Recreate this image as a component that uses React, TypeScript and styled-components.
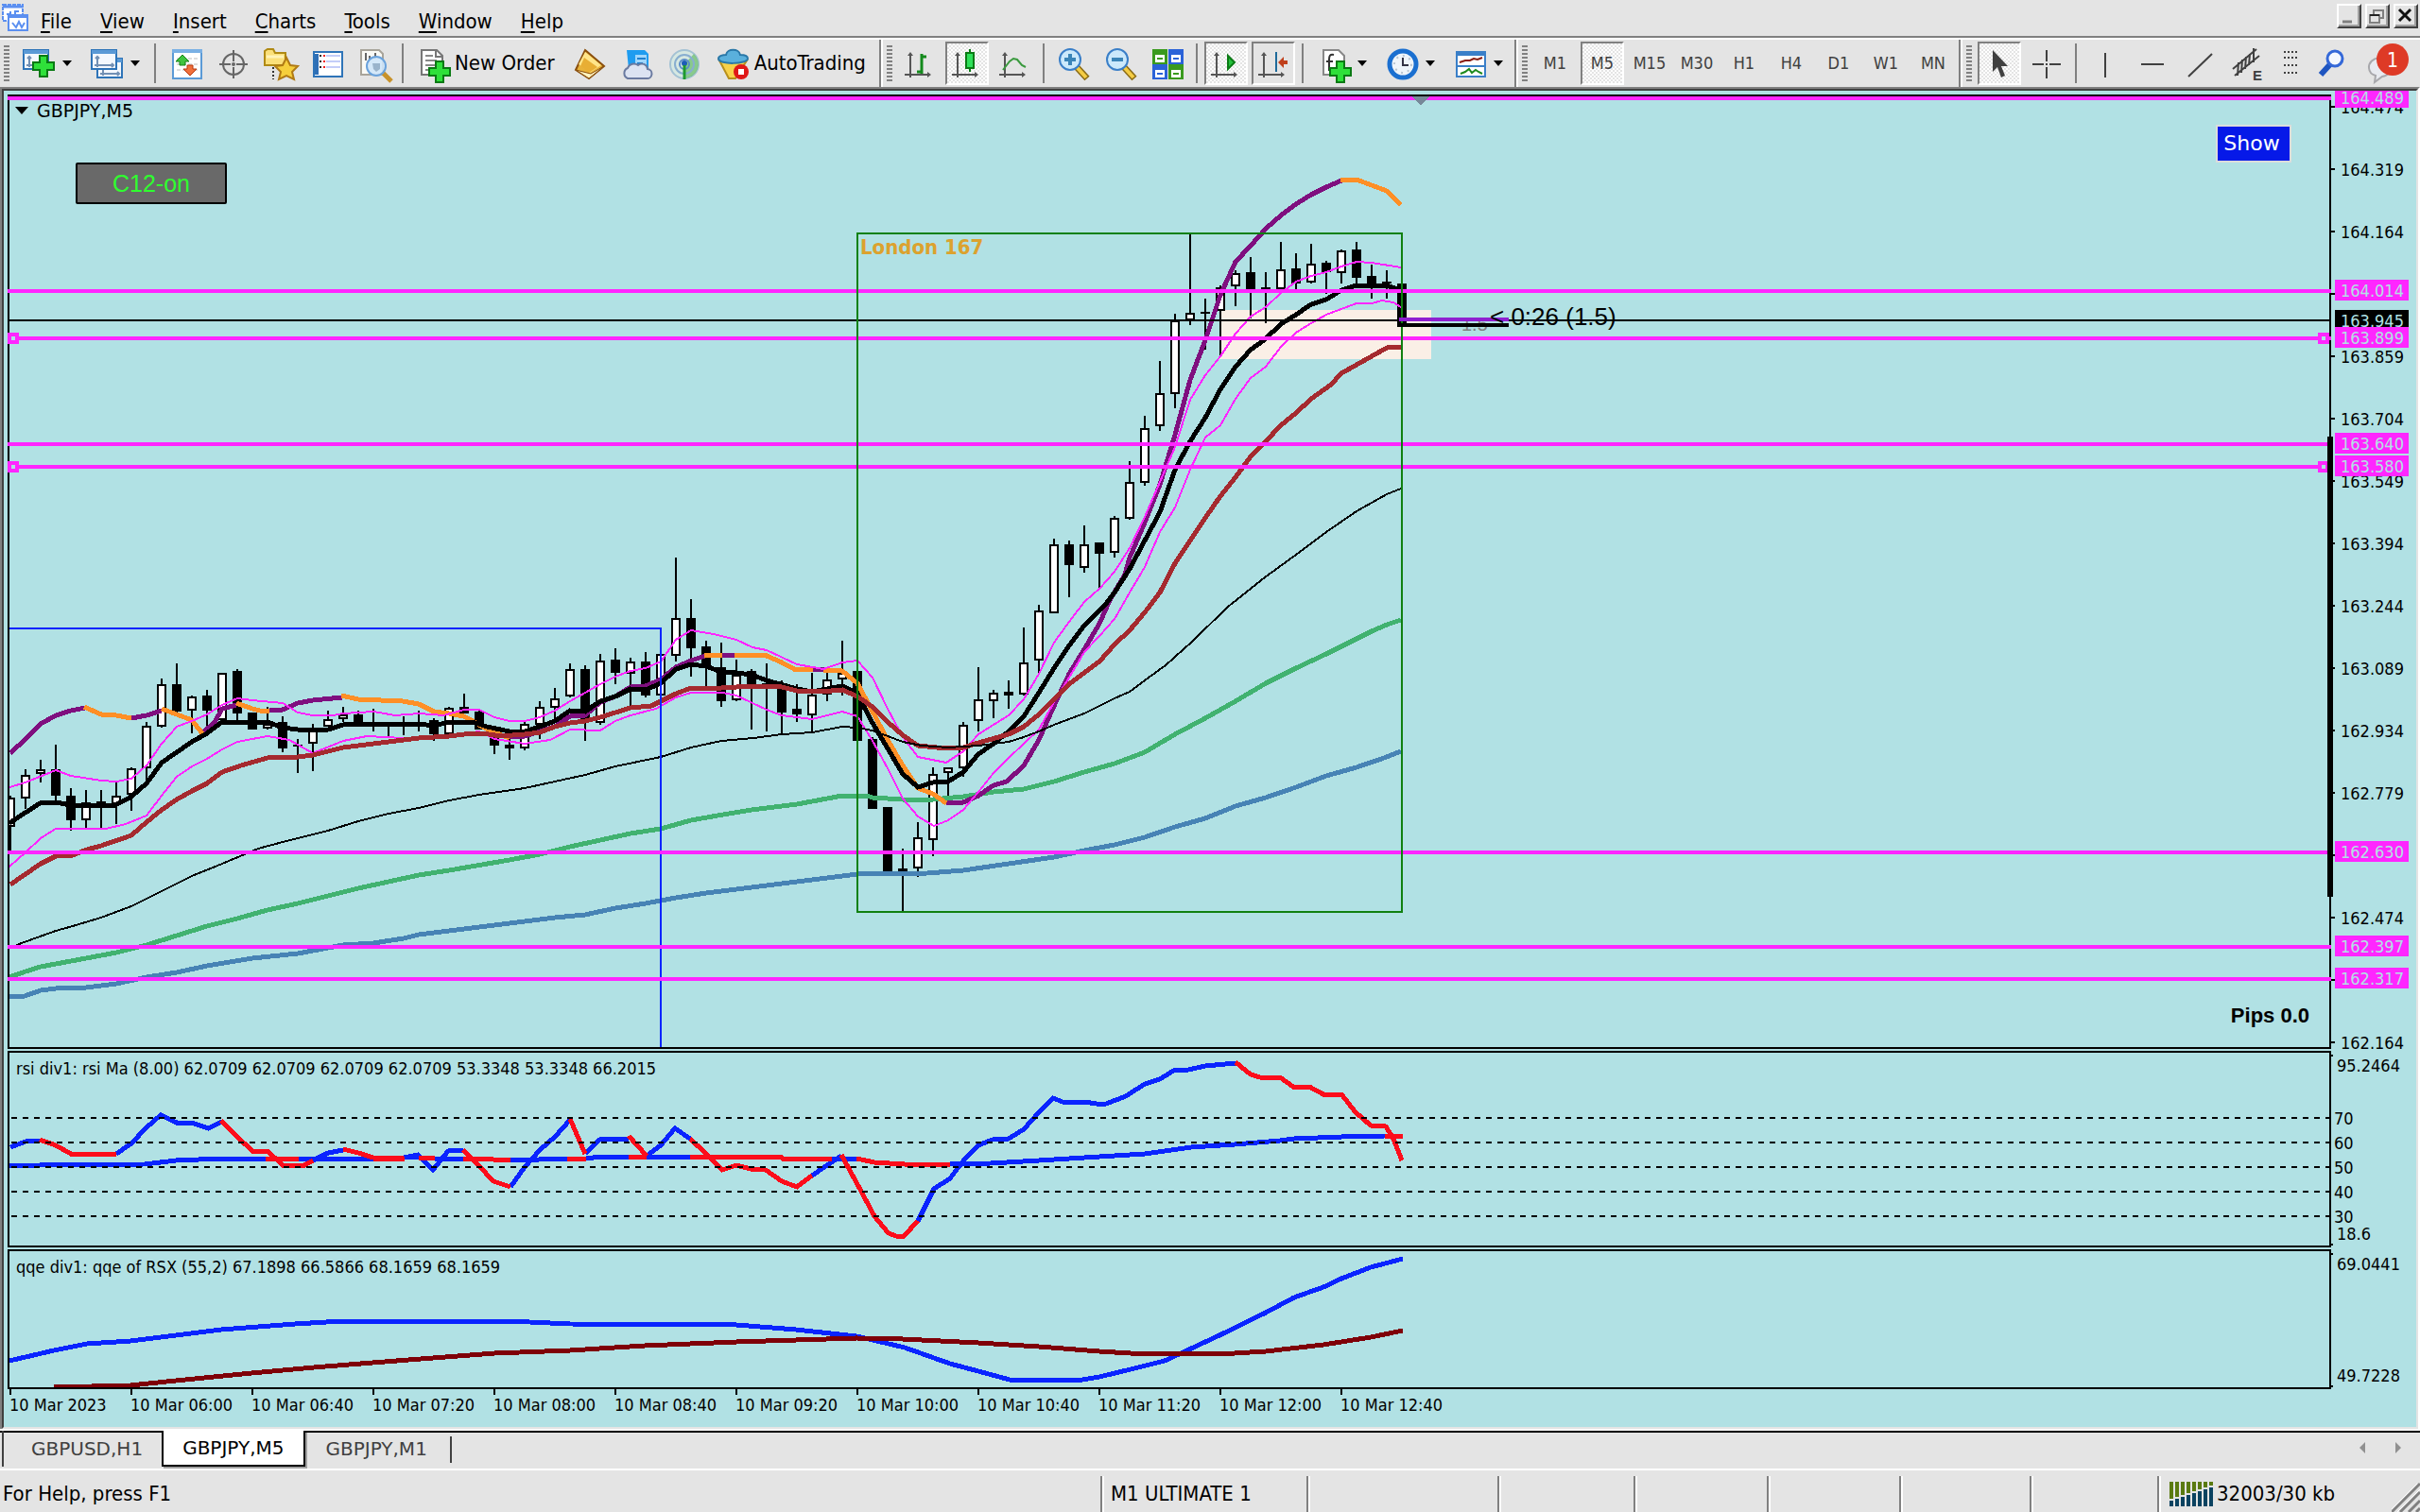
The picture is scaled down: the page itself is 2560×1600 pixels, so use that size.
import React from "react";
import styled, { createGlobalStyle, css } from "styled-components";

/* ---------- theme ---------- */
const C = {
  face: "#e4e4e4",
  gray: "#808080",
  dark: "#404040",
  chart: "#b1e1e4",
  magenta: "#ff26ff",
  blue: "#0a24ff",
  red: "#fc0d1b",
  purple: "#7f0f7f",
  orange: "#ff8f26",
  brown: "#a52a2f",
  green: "#41b270",
  steel: "#4783b5",
  maroon: "#7f0008",
  session: "#108010",
};
const UI_FONT = '"DejaVu Sans Condensed", "Noto Sans", sans-serif';
const WIDE_FONT = '"DejaVu Sans", "Noto Sans", sans-serif';
const ARIAL = '"Liberation Sans", Arial, sans-serif';

const GlobalStyle = createGlobalStyle`
  *, *::before, *::after { box-sizing: border-box; }
  body { margin: 0; background: ${C.face}; color: #000; font: 22px/26px ${UI_FONT}; }
  button { font: inherit; color: inherit; }
`;

/* ---------- shell ---------- */
const Page = styled.div`
  display: flex;
  flex-direction: column;
  min-height: 100vh;
  background: ${C.face};
`;

const MenuBar = styled.header`
  display: flex;
  align-items: center;
  height: 40px;
  border-bottom: 2px solid ${C.gray};
  padding: 0 2px;
`;
const MenuNav = styled.nav`
  display: flex;
  flex: 1;
`;
const MenuItem = styled.button`
  border: 0;
  background: none;
  padding: 7px 15px 0 15px;
  line-height: 26px;
  &::first-letter {
    text-decoration: underline;
    text-decoration-thickness: 2px;
    text-underline-offset: 3px;
  }
`;
const MenuLogo = styled.svg`
  width: 28px;
  height: 30px;
  flex: none;
  margin-right: -2px;
`;
const WindowButtons = styled.div`
  display: flex;
  gap: 4px;
  align-self: flex-start;
  padding-top: 4px;
`;
const WindowButton = styled.button`
  width: 26px;
  height: 26px;
  padding: 0;
  background: ${C.face};
  border: 2px solid;
  border-color: #fff ${C.dark} ${C.dark} #fff;
  box-shadow: inset -2px -2px 0 #a0a0a0;
  svg {
    display: block;
    width: 22px;
    height: 22px;
  }
`;

/* ---------- toolbar ---------- */
const ToolBar = styled.div`
  display: flex;
  height: 52px;
  border-top: 2px solid #fff;
`;
const ToolGroup = styled.div<{ $grow?: boolean }>`
  display: flex;
  align-items: center;
  gap: 4px;
  padding: 0 4px;
  ${(p) =>
    p.$grow
      ? css`
          flex: 1;
          min-width: 0;
          padding-right: 0;
        `
      : css`
          border-right: 2px solid ${C.gray};
          box-shadow: 2px 0 0 #fff;
          margin-right: 2px;
        `}
`;
const Grip = styled.i`
  width: 6px;
  height: 38px;
  margin-right: 2px;
  background: repeating-linear-gradient(${C.gray} 0 2px, transparent 2px 4px);
`;
const Separator = styled.i`
  width: 2px;
  height: 42px;
  margin: 0 3px;
  background: ${C.gray};
`;
const Tool = styled.button<{ $pressed?: boolean; $plain?: boolean; $width?: number }>`
  display: flex;
  align-items: center;
  justify-content: center;
  flex: none;
  width: ${(p) => p.$width ?? 46}px;
  height: 46px;
  padding: 0;
  border: 2px solid transparent;
  background: none;
  color: ${C.dark};
  font-size: 18px;
  ${(p) =>
    p.$pressed &&
    css`
      border-color: ${C.gray} #fff #fff ${C.gray};
      background: ${p.$plain ? C.face : "repeating-conic-gradient(#fff 0 25%, #e4e4e4 0 50%) 0 0 / 4px 4px"};
    `}
`;
const TextTool = styled.button`
  display: flex;
  align-items: center;
  flex: none;
  gap: 4px;
  height: 46px;
  padding: 0 10px 0 7px;
  border: 0;
  background: none;
`;
const Caret = styled.i`
  margin-left: 6px;
  border: 5px solid transparent;
  border-top: 6px solid #000;
  border-bottom: 0;
`;
const IconSvg = styled.svg`
  width: 36px;
  height: 36px;
  flex: none;
  overflow: visible;
`;

/* ---------- chart window ---------- */
const Workspace = styled.main`
  display: flex;
  flex: 1;
  border-top: 2px solid ${C.gray};
  border-left: 2px solid ${C.gray};
  border-right: 2px solid #fff;
`;
const ChartWindow = styled.section`
  position: relative;
  display: flex;
  flex-direction: column;
  flex: 1;
  min-width: 0;
  gap: 2px;
  padding: 4px 0 0 4px;
  border-top: 2px solid ${C.dark};
  border-left: 2px solid ${C.dark};
  border-right: 2px solid ${C.face};
  border-bottom: 2px solid ${C.face};
  background: ${C.chart};
  overflow: hidden;
`;
const PanelRow = styled.div<{ $height?: number }>`
  position: relative;
  display: flex;
  ${(p) =>
    p.$height
      ? css`
          height: ${p.$height}px;
        `
      : css`
          flex: 1;
          min-height: 1010px;
        `}
`;
const Plot = styled.svg`
  flex: 1;
  min-width: 0;
  height: 100%;
  shape-rendering: crispEdges;
  font: 18px ${UI_FONT};
`;
const Axis = styled.svg`
  flex: none;
  width: 90px;
  height: 100%;
  overflow: visible;
  shape-rendering: crispEdges;
  font: 18px ${UI_FONT};
`;
const PanelTitle = styled.h2<{ $symbol?: boolean }>`
  position: absolute;
  left: 9px;
  top: 8px;
  margin: 0;
  display: flex;
  align-items: center;
  gap: 9px;
  font: 18px/22px ${UI_FONT};
  ${(p) =>
    p.$symbol &&
    css`
      left: 8px;
      top: 6px;
      font: 19px/22px ${WIDE_FONT};
    `}
`;
const TitleArrow = styled.i`
  border: 7px solid transparent;
  border-top: 8px solid #000;
  border-bottom: 0;
`;
const TimeAxis = styled.ol`
  display: flex;
  height: 40px;
  margin: -2px 0 0 2px;
  padding: 0;
  list-style: none;
  font: 18px/22px ${UI_FONT};
`;
const TimeTick = styled.li`
  flex: none;
  width: 128px;
  padding-top: 6px;
  text-indent: -2px;
  white-space: nowrap;
  &::before {
    content: "";
    display: block;
    width: 2px;
    height: 6px;
    margin-top: -6px;
    background: #000;
  }
`;
const SwitchButton = styled.button`
  position: absolute;
  left: 72px;
  top: 72px;
  width: 160px;
  height: 44px;
  padding: 0;
  border: 2px solid #000;
  border-radius: 2px;
  background: #696969;
  color: #2fff2f;
  font: 25px/38px ${ARIAL};
`;
const ShowButton = styled.button`
  position: absolute;
  right: 132px;
  top: 32px;
  width: 80px;
  height: 40px;
  padding: 0 4px 0 0;
  border: 2px solid #dcdcdc;
  background: #0619e8;
  color: #fff;
  font: 22px/34px ${WIDE_FONT};
`;

/* ---------- bottom bars ---------- */
const TabBar = styled.div`
  display: flex;
  align-items: flex-start;
  height: 44px;
  border-top: 2px solid #fff;
  border-bottom: 2px solid #fff;
  box-shadow: inset 0 2px 0 #000;
  padding-left: 2px;
`;
const Tabs = styled.div`
  display: flex;
  flex: 1;
  height: 38px;
  padding-top: 2px;
  border-left: 2px solid ${C.dark};
`;
const Tab = styled.button<{ $active?: boolean }>`
  height: 36px;
  border: 0;
  background: none;
  padding: 0 24px 2px 22px;
  color: ${C.dark};
  font: 20px/26px ${WIDE_FONT};
  ${(p) =>
    p.$active &&
    css`
      padding: 0 20px;
      color: #000;
      background: #fff;
      border: 2px solid #000;
      border-top: 0;
      margin-top: -2px;
      height: 38px;
      box-shadow: 2px 2px 0 #a0a0a0;
    `}
  &:first-child {
    padding-left: 29px;
    padding-right: 20px;
  }
`;
const TabEnd = styled.i`
  width: 2px;
  height: 28px;
  margin-top: 4px;
  background: ${C.dark};
`;
const TabScroll = styled.div`
  display: flex;
  gap: 16px;
  padding: 9px 12px 0 0;
`;
const ScrollButton = styled.button`
  width: 22px;
  height: 18px;
  padding: 0;
  border: 0;
  background: none;
  svg {
    display: block;
    margin: 3px auto;
  }
`;
const StatusBar = styled.footer`
  display: flex;
  height: 44px;
  padding-top: 6px;
`;
const StatusCell = styled.div<{ $width?: number }>`
  display: flex;
  align-items: center;
  gap: 4px;
  height: 38px;
  padding: 0 0 0 9px;
  ${(p) =>
    p.$width
      ? css`
          flex: none;
          width: ${p.$width}px;
          border-left: 2px solid ${C.gray};
          box-shadow: inset 2px 0 0 #fff;
        `
      : css`
          flex: 1;
          padding-left: 3px;
        `}
`;
const SizeGrip = styled.svg`
  width: 30px;
  height: 32px;
  margin: 6px 0 0 auto;
`;

/* ---------- icons ---------- */
const Plus = ({ x, y }: { x: number; y: number }) => (
  <path
    transform={`translate(${x} ${y})`}
    d="M8 1h8v7h7v8h-7v7H8v-7H1V8h7z"
    fill="#2fe03a"
    stroke="#0a7a14"
    strokeWidth="2"
  />
);
const Axes = () => (
  <g stroke="#555" strokeWidth="2" fill="#555">
    <path d="M8 8v25M2 30h26" fill="none" />
    <path d="M5 10l3-4 3 4zM26 27l4 3-4 3z" stroke="none" />
  </g>
);
const MiniWindow = ({ x, y }: { x: number; y: number }) => (
  <g transform={`translate(${x} ${y})`}>
    <rect x="1" y="1" width="26" height="20" fill="#f4f8fd" stroke="#2e74b8" strokeWidth="2" />
    <rect x="1" y="1" width="26" height="4" fill="#5b9ad6" />
    <path d="M7 8v11M4 17h20M5 10l2-2 2 2M22 15l2 2-2 2" fill="none" stroke="#7290b4" strokeWidth="2" />
  </g>
);
const icons: Record<string, React.ReactNode> = {
  newChart: (
    <>
      <MiniWindow x={0} y={3} />
      <Plus x={10} y={9} />
    </>
  ),
  profiles: (
    <>
      <MiniWindow x={6} y={12} />
      <MiniWindow x={0} y={3} />
    </>
  ),
  market: (
    <g transform="translate(2 0)">
      <rect x="4" y="4" width="30" height="30" fill="#fff" stroke="#5b9ad6" strokeWidth="2" />
      <rect x="3" y="3" width="32" height="4" fill="#7ab0e4" />
      <path d="M8 13h22M8 19h22M8 25h22" stroke="#ddd" strokeWidth="2" strokeDasharray="4 2" />
      <path d="M14 9l7 7h-4v4h-6v-4H7z" fill="#3fc43f" stroke="#178017" />
      <path d="M22 31l7-7h-4v-4h-6v4h-4z" fill="#f0703c" stroke="#b8380c" />
    </g>
  ),
  crosshairWindow: (
    <g transform="translate(2 0)" fill="none" stroke="#666" strokeWidth="2">
      <circle cx="18" cy="19" r="11" />
      <path d="M18 4v12M18 22v12M3 19h12M21 19h12" />
      <circle cx="18" cy="19" r="1" />
    </g>
  ),
  favorites: (
    <g transform="translate(2 0)">
      <path d="M1 20V5l3-2h6l2 4h11v13z" fill="#fbe07a" stroke="#b08a14" strokeWidth="2" />
      <path d="M3 11h18" stroke="#fff3b8" strokeWidth="3" />
      <path d="M10 22v13" stroke="#333" strokeWidth="2" strokeDasharray="2 2" />
      <path d="M24 12l4 8 8 1-6 6 2 8-8-4-8 4 2-8-6-6 8-1z" fill="#f6cf3c" stroke="#b07a14" strokeWidth="2" />
    </g>
  ),
  navigator: (
    <g transform="translate(2 0)">
      <rect x="3" y="6" width="30" height="26" fill="#fff" stroke="#2e74b8" strokeWidth="2" />
      <path d="M6 8v22" stroke="#2e6fb6" strokeWidth="4" />
      <path d="M16 10h15M16 16h15M16 22h15" stroke="#c4cdf8" strokeWidth="2" />
      <path d="M9 10h2M9 16h2M9 22h2" stroke="#222" strokeWidth="2" />
      <path d="M13 10h2M13 16h2M13 22h2" stroke="#f02020" strokeWidth="2" />
    </g>
  ),
  tester: (
    <g transform="translate(2 0)">
      <path d="M3 4h19l4 4v22H3z" fill="#fafaf6" stroke="#a8a49a" strokeWidth="2" />
      <path d="M8 7v8M12 10v5M18 7v6" stroke="#666" strokeWidth="2" />
      <path d="M26 28l9 9" stroke="#c8922a" strokeWidth="5" />
      <circle cx="19" cy="21" r="10" fill="#cfe6fa" fillOpacity=".9" stroke="#6aa2dc" strokeWidth="2" />
      <path d="M15 18h8v6l-4 3-3-3z" fill="#9ab4cc" />
    </g>
  ),
  newOrder: (
    <>
      <path d="M5 4h16l6 6v20H5z" fill="#fff" stroke="#777" strokeWidth="2" />
      <path d="M20 4v7h7" fill="none" stroke="#777" strokeWidth="2" />
      <path d="M9 10h8M9 15h12M9 20h12M9 25h6" stroke="#888" strokeWidth="2" />
      <Plus x={12} y={15} />
    </>
  ),
  metaEditor: (
    <>
      <path d="M13 4L33 21 17 34 3 25z" fill="#e8b23a" stroke="#8a4f0c" strokeWidth="2" />
      <path d="M13 6l17 14-12 8-12-9z" fill="#ffe58a" />
      <path d="M12 12l14 10-9 6-9-7z" fill="#e8ae34" />
      <path d="M3 25l14 9 16-13-14 8z" fill="#fff3c0" stroke="#8a4f0c" strokeWidth="1" />
    </>
  ),
  cloud: (
    <>
      <path d="M7 4h19l4 4v16H9z" fill="#1e9cf0" />
      <path d="M16 9h12v14H16z" fill="#9fd6fb" />
      <path d="M18 13h9M18 18h6" stroke="#1e80d0" strokeWidth="2" />
      <path d="M8 34a6 6 0 010-11 7 7 0 0111-3 6 6 0 0110 4 5 5 0 01-1 10z" fill="#dce3f2" stroke="#6a7aa0" strokeWidth="2" />
    </>
  ),
  signals: (
    <>
      <circle cx="18" cy="19" r="15" fill="#d6e8e2" stroke="#a4c2d4" strokeWidth="2" />
      <path d="M18 19V34A15 15 0 0028 8z" fill="#6fc06f" fillOpacity=".75" />
      <circle cx="18" cy="19" r="10" fill="none" stroke="#88aed0" strokeWidth="2" />
      <circle cx="18" cy="19" r="5" fill="none" stroke="#5a8cc8" strokeWidth="2" />
      <circle cx="18" cy="18" r="3" fill="#1e5cb8" />
      <path d="M18 20v15" stroke="#1e9a2e" strokeWidth="3" />
    </>
  ),
  autoTrading: (
    <>
      <path d="M3 15l10 19h7l12-19z" fill="#f8d24a" stroke="#b8901c" strokeWidth="2" />
      <path d="M2 13c0-3 5-4 8-4 1-7 14-7 15 0 4 0 8 1 8 4 0 6-31 7-31 0z" fill="#5ab0dc" stroke="#2a78a8" strokeWidth="2" />
      <circle cx="26" cy="27" r="8" fill="#e01818" />
      <rect x="23" y="24" width="6" height="6" fill="#fff" />
    </>
  ),
  barChart: (
    <>
      <Axes />
      <path d="M20 8v21M20 11h5M15 27h5" stroke="#138a1c" strokeWidth="3" fill="none" />
    </>
  ),
  candleChart: (
    <>
      <Axes />
      <path d="M21 3v24" stroke="#0a7a14" strokeWidth="2" />
      <rect x="17" y="7" width="8" height="16" fill="#2fe05a" stroke="#0a7a14" strokeWidth="2" />
    </>
  ),
  lineChart: (
    <>
      <Axes />
      <path d="M6 25l7-9 4-3 4 1 5 6 4 2" stroke="#3a9a3e" strokeWidth="2" fill="none" />
    </>
  ),
  zoomIn: (
    <>
      <path d="M22 22l11 12" stroke="#8a6a14" strokeWidth="7" />
      <path d="M22 22l10 11" stroke="#f4cc44" strokeWidth="4" />
      <circle cx="15" cy="14" r="11" fill="#cbe9fb" stroke="#3a7fc8" strokeWidth="2" />
      <path d="M15 8v12M9 14h12" stroke="#3a85b8" strokeWidth="4" />
    </>
  ),
  zoomOut: (
    <>
      <path d="M22 22l11 12" stroke="#8a6a14" strokeWidth="7" />
      <path d="M22 22l10 11" stroke="#f4cc44" strokeWidth="4" />
      <circle cx="15" cy="14" r="11" fill="#cbe9fb" stroke="#3a7fc8" strokeWidth="2" />
      <path d="M9 14h12" stroke="#3a85b8" strokeWidth="4" />
    </>
  ),
  tile: (
    <>
      {[
        [2, 3, "#3a9a1e"],
        [19, 3, "#2a62d8"],
        [2, 19, "#2a62d8"],
        [19, 19, "#3a9a1e"],
      ].map(([x, y, fill]) => (
        <g key={`${x}-${y}`} transform={`translate(${x} ${y})`}>
          <rect width="16" height="16" fill={fill as string} />
          <rect x="3" y="6" width="10" height="8" fill="#fff" />
          <path d="M5 10h6" stroke={fill as string} strokeWidth="2" />
        </g>
      ))}
    </>
  ),
  autoScroll: (
    <>
      <Axes />
      <path d="M20 10l7 7-7 7z" fill="#22c03a" stroke="#0a7a14" strokeWidth="2" />
    </>
  ),
  chartShift: (
    <>
      <Axes />
      <path d="M21 6v21" stroke="#1e6a9a" strokeWidth="2" />
      <path d="M23 17l6-6v4h4v4h-4v4z" fill="#c0401c" />
    </>
  ),
  indicators: (
    <>
      <path d="M6 4h16l6 6v20H6z" fill="#fff" stroke="#888" strokeWidth="2" />
      <path d="M17 9c-4-1-5 1-5 5v12M9 16h7" fill="none" stroke="#333" strokeWidth="2" />
      <Plus x={12} y={15} />
    </>
  ),
  clock: (
    <>
      <circle cx="18" cy="19" r="14" fill="#eef4fa" stroke="#1a6fd0" strokeWidth="5" />
      <path d="M18 12v8h6" fill="none" stroke="#334" strokeWidth="2" />
      <circle cx="18" cy="19" r="9" fill="none" stroke="#b8c4d0" strokeWidth="2" strokeDasharray="2 5" />
    </>
  ),
  template: (
    <>
      <rect x="3" y="6" width="30" height="26" fill="#fff" stroke="#3a7fc8" strokeWidth="2" />
      <rect x="3" y="5" width="30" height="5" fill="#3a7fc8" />
      <path d="M3 21h30" stroke="#3a7fc8" strokeWidth="2" />
      <path d="M6 17l6-2h5l4-2 4 1 5-2" stroke="#8a1c10" strokeWidth="2" fill="none" />
      <path d="M7 29l5-2 4-3 3 4 4-3 3 2 4 2" stroke="#1e8a1e" strokeWidth="2" fill="none" />
    </>
  ),
  cursor: <path d="M11 4v23l5-5 4 11 4-2-4-10h7z" fill={C.dark} />,
  crosshair: <path d="M18 4v12M18 22v12M3 19h12M21 19h12M17 19h2" stroke={C.dark} strokeWidth="2" />,
  verticalLine: <path d="M18 7v26" stroke={C.dark} strokeWidth="2" />,
  horizontalLine: <path d="M6 19h24" stroke={C.dark} strokeWidth="2" />,
  trendLine: <path d="M6 32L31 8" stroke={C.dark} strokeWidth="2" />,
  channel: (
    <>
      <path
        d="M3 24L28 3M5 31L31 10M9 17l-1 14M13 14l-1 14M17 11l-1 13M21 8l-1 12M25 2v15"
        stroke={C.dark}
        strokeWidth="2"
        fill="none"
      />
      <text x="24" y="36" fontFamily={ARIAL} fontWeight="700" fontSize="15" fill={C.dark}>
        E
      </text>
    </>
  ),
  fibonacci: (
    <path d="M12 6h16M12 12h16M12 20h16M12 28h16" stroke={C.dark} strokeWidth="2" strokeDasharray="2 2" />
  ),
  search: (
    <>
      <path d="M16 19L6 30" stroke="#1e55c0" strokeWidth="6" />
      <circle cx="21" cy="13" r="8" fill="#f4f8ff" stroke="#3468d8" strokeWidth="3" />
    </>
  ),
};
const Icon = ({ name }: { name: string }) => (
  <IconSvg viewBox="0 0 36 36" aria-hidden="true">
    {icons[name]}
  </IconSvg>
);
const ChatIcon = styled.svg`
  width: 46px;
  height: 46px;
`;

/* ---------- chart data (plot pixels, one candle every 16) ---------- */
// high, body top, body bottom, low, 1 = bullish
const candles: number[][] = [
  [842, 844, 875, 900, 1], [814, 820, 845, 856, 1], [804, 814, 819, 828, 1], [788, 814, 842, 848, 0],
  [834, 842, 868, 879, 0], [836, 849, 868, 876, 1], [836, 848, 852, 876, 0], [828, 842, 851, 872, 1],
  [812, 813, 841, 858, 1], [764, 768, 813, 825, 1], [718, 724, 769, 770, 1], [702, 724, 753, 754, 0],
  [736, 737, 752, 776, 1], [730, 736, 752, 770, 0], [712, 712, 762, 764, 1], [708, 710, 755, 763, 0],
  [754, 754, 772, 772, 0], [748, 766, 771, 772, 1], [758, 764, 792, 796, 0], [782, 788, 790, 818, 0],
  [766, 773, 787, 816, 1], [752, 761, 769, 769, 1], [748, 756, 761, 764, 1], [752, 756, 765, 767, 0],
  [750, 765, 767, 774, 0], [764, 767, 769, 781, 0], [758, 767, 769, 778, 0], [752, 766, 768, 774, 0],
  [760, 762, 777, 784, 0], [748, 749, 777, 781, 1], [734, 748, 755, 755, 0], [752, 753, 772, 772, 0],
  [773, 775, 789, 798, 0], [782, 788, 792, 804, 0], [764, 766, 792, 794, 1], [742, 748, 767, 782, 1],
  [728, 739, 749, 765, 1], [702, 708, 737, 738, 1], [704, 708, 762, 784, 0], [692, 699, 765, 767, 1],
  [686, 698, 712, 724, 0], [696, 700, 713, 747, 1], [690, 700, 736, 738, 0], [692, 692, 736, 736, 1],
  [590, 654, 694, 700, 1], [634, 654, 686, 716, 0], [678, 684, 707, 727, 0], [680, 706, 742, 748, 0],
  [698, 714, 741, 742, 1], [708, 710, 729, 772, 0], [702, 723, 725, 774, 0], [720, 728, 754, 777, 0],
  [724, 750, 756, 764, 0], [712, 735, 757, 774, 1], [712, 719, 735, 742, 1], [678, 712, 719, 736, 1],
  [710, 710, 784, 784, 0], [780, 782, 856, 856, 0], [854, 854, 922, 922, 0], [898, 919, 923, 964, 1],
  [870, 886, 919, 928, 1], [812, 819, 889, 906, 1], [812, 812, 818, 847, 1], [764, 767, 813, 822, 1],
  [706, 740, 763, 774, 1], [730, 733, 742, 760, 1], [720, 732, 736, 750, 0], [664, 701, 735, 736, 1],
  [640, 646, 699, 712, 1], [570, 576, 649, 649, 1], [572, 576, 598, 632, 0], [556, 576, 601, 606, 1],
  [574, 574, 586, 622, 0], [546, 548, 585, 590, 1], [488, 510, 549, 550, 1], [440, 453, 511, 514, 1],
  [382, 416, 451, 456, 1], [332, 339, 417, 432, 1], [248, 331, 339, 344, 1], [316, 330, 332, 370, 0],
  [302, 304, 329, 376, 1], [286, 289, 303, 324, 1], [272, 288, 306, 337, 0], [288, 304, 306, 342, 0],
  [256, 285, 306, 306, 1], [268, 284, 300, 306, 0], [258, 279, 299, 300, 1], [276, 278, 288, 311, 0],
  [264, 265, 289, 300, 1], [256, 264, 294, 300, 0], [280, 292, 301, 316, 0], [286, 298, 300, 316, 0],
  [300, 300, 345, 346, 0],
];

const T3_UP = [
  "11,797 27,782 43,766 59,757 75,752 90,749",
  "139,760 155,757 171,752",
  "214,776 227,764 235,750 250,746",
  "285,752 299,751 315,744 331,741 362,738",
  "539,780 555,779 587,769 603,758 619,757 635,743 651,737 667,727 683,726 699,719 715,706 731,699 746,694",
  "763,694 778,693",
  "860,708 872,708",
  "1001,850 1019,849 1035,842 1051,831 1065,827 1083,810 1099,783 1115,747 1131,713 1147,687 1163,660 1174,635 1190,608 1195,590 1211,553 1227,513 1243,460 1259,402 1275,360 1291,312 1307,277 1323,260 1339,242 1355,228 1371,216 1387,206 1403,198 1419,191",
];
const T3_DOWN = [
  "89,748 107,756 123,757 139,760",
  "171,750 187,756 203,762 214,776",
  "250,744 267,750 275,752 285,752",
  "361,736 379,740 426,742 443,745 459,753 475,755 491,758 507,767 523,775 539,781",
  "745,693 764,694",
  "777,693 811,694 827,701 840,708 860,708",
  "871,709 891,710 907,723 923,753 939,783 955,810 971,834 987,840 1001,850",
  "1418,190 1435,190 1451,196 1467,202 1482,217",
];
const MA_FAST =
  "10,871 42,850 59,849 75,852 122,852 139,843 155,829 171,807 187,796 203,785 219,776 235,764 283,764 299,770 315,772 347,772 363,767 443,766 459,768 475,764 500,764 515,769 539,774 555,774 571,769 587,763 603,752 619,753 635,742 651,737 667,729 683,730 699,723 715,708 731,703 747,705 763,711 779,712 795,714 811,720 843,729 859,732 875,729 891,726 904,732 914,748 923,765 939,792 955,819 971,833 987,828 1003,827 1019,817 1035,798 1051,787 1067,774 1083,758 1099,733 1115,707 1131,683 1147,662 1169,640 1179,627 1195,602 1211,572 1227,542 1243,497 1259,467 1275,442 1291,412 1307,388 1323,370 1337,360 1355,343 1371,333 1387,322 1403,317 1419,307 1435,302 1467,302 1478,306";
const MA_BROWN =
  "11,936 43,914 59,906 77,905 92,899 107,895 139,884 155,870 171,857 187,846 203,837 219,829 235,817 255,810 283,802 315,801 331,799 363,791 395,787 443,781 475,779 491,777 510,776 530,779 555,777 571,775 587,769 603,765 619,763 635,759 667,749 689,747 715,734 731,728 763,728 796,726 827,727 843,731 868,732 891,730 907,737 923,748 939,764 955,778 971,789 991,791 1019,791 1035,786 1067,777 1083,769 1099,756 1115,740 1131,724 1147,712 1163,700 1179,682 1195,667 1211,648 1227,627 1243,596 1259,572 1275,548 1291,525 1307,505 1323,483 1339,467 1355,450 1371,437 1387,422 1408,407 1419,395 1435,386 1451,377 1467,368 1482,367";
const MA_THIN =
  "12,1003 20,999 59,985 77,980 107,971 139,959 171,943 203,927 235,914 273,898 299,891 347,879 379,869 411,861 443,855 475,847 507,841 555,834 587,827 619,820 651,811 699,801 731,791 763,784 797,781 827,777 859,775 891,769 907,770 923,773 939,779 955,785 975,789 1003,791 1035,789 1067,785 1083,780 1099,774 1115,767 1147,755 1179,739 1195,732 1211,720 1233,704 1261,679 1299,642 1338,611 1371,587 1403,563 1435,541 1467,523 1482,517";
const MA_GREEN =
  "10,1034 27,1028 43,1023 59,1020 91,1014 123,1008 155,1000 187,990 219,980 251,972 283,963 315,956 347,948 379,940 411,933 443,926 475,921 539,910 571,904 603,896 635,889 667,882 699,877 731,868 765,862 795,857 843,851 891,842 917,842 923,844 955,846 987,846 1019,843 1051,838 1083,835 1115,827 1147,817 1179,808 1211,796 1243,777 1275,760 1307,742 1339,723 1371,707 1403,692 1435,676 1451,668 1467,661 1482,656";
const MA_STEEL =
  "10,1054 26,1054 43,1048 59,1046 91,1045 123,1041 155,1034 187,1029 219,1022 267,1014 315,1009 363,1000 395,998 427,993 443,989 491,983 539,977 587,971 619,968 651,961 683,956 715,950 747,945 795,939 859,931 907,925 981,924 1019,921 1067,914 1115,907 1147,900 1179,894 1211,886 1243,875 1275,866 1307,853 1339,844 1371,833 1403,821 1435,812 1467,801 1482,795";
const BAND_UPPER =
  "10,833 27,828 59,815 75,821 107,826 123,827 139,824 155,810 171,787 187,769 203,763 219,756 235,746 251,739 267,741 299,744 315,754 331,757 352,757 363,755 395,753 418,757 443,755 469,757 491,751 507,751 523,759 539,763 555,763 571,759 587,752 603,742 619,733 635,724 651,716 667,710 683,707 699,700 715,677 731,667 755,671 779,677 796,685 811,688 843,703 871,708 891,701 907,699 923,717 939,750 955,780 971,801 1001,807 1019,795 1035,777 1067,757 1083,740 1099,713 1115,680 1131,658 1147,637 1163,623 1179,605 1195,580 1211,547 1227,510 1243,473 1259,423 1275,397 1291,377 1307,353 1323,335 1339,325 1355,310 1371,298 1387,292 1403,288 1419,282 1435,277 1451,278 1482,283";
const BAND_LOWER =
  "10,917 27,902 43,887 59,877 112,877 133,872 155,863 171,842 187,822 203,811 219,803 235,793 251,785 283,779 306,783 331,797 363,784 388,779 427,781 480,778 507,774 523,782 555,787 582,783 603,772 635,773 651,763 667,757 694,750 715,738 731,733 765,733 779,736 811,751 827,757 859,761 891,753 907,758 923,784 939,813 955,845 971,864 988,874 1003,868 1019,857 1035,838 1051,818 1067,802 1083,787 1099,772 1115,743 1131,717 1147,690 1163,673 1179,655 1195,627 1211,600 1227,563 1243,537 1259,497 1275,463 1291,450 1307,422 1323,400 1339,388 1355,367 1371,352 1387,342 1403,333 1419,327 1435,321 1451,321 1462,318 1474,320 1482,325";

const RSI_UP = [
  "11,1214 27,1208 42,1207",
  "123,1221 139,1210 155,1193 170,1180 187,1188 203,1188 220,1194 235,1187",
  "331,1228 347,1220 363,1217",
  "427,1225 442,1222 458,1238 474,1218 490,1217",
  "540,1256 555,1235 571,1217 587,1203 603,1185",
  "619,1221 634,1206 665,1205",
  "684,1223 699,1212 714,1194 730,1205",
  "859,1244 875,1233 890,1223",
  "971,1292 988,1258 1005,1247 1020,1227 1035,1212 1050,1206 1067,1205 1083,1195 1099,1177 1114,1162 1124,1166 1147,1166 1160,1168 1170,1168 1191,1160 1211,1147 1227,1142 1243,1132 1257,1132 1275,1128 1307,1125",
  "10,1234 42,1233 153,1232 186,1228 234,1226 281,1226",
  "316,1226 395,1226",
  "428,1225 443,1224",
  "460,1226 490,1226",
  "540,1228 600,1226",
  "620,1226 635,1224 665,1224",
  "684,1224 730,1224",
  "880,1226 906,1226",
  "1005,1232 1048,1231 1099,1228 1147,1225 1211,1221 1260,1214 1306,1211 1354,1207 1369,1205 1419,1203 1465,1202",
];
const RSI_DOWN = [
  "42,1206 59,1212 75,1221 123,1221",
  "234,1186 251,1203 267,1218 283,1218 299,1233 322,1233 331,1228",
  "363,1216 379,1220 395,1225 427,1226",
  "490,1217 506,1233 522,1250 540,1256",
  "603,1184 619,1221",
  "665,1202 684,1223",
  "730,1205 746,1220 764,1238 779,1233 794,1237 810,1238 827,1250 843,1256 859,1244",
  "890,1222 908,1255 925,1287 940,1305 948,1308 956,1308 971,1292",
  "1307,1124 1323,1137 1333,1140 1354,1140 1368,1150 1385,1150 1400,1158 1419,1158 1434,1177 1450,1191 1466,1192 1474,1205 1483,1228",
  "281,1226 316,1226",
  "395,1226 428,1226",
  "443,1225 460,1225",
  "490,1226 522,1227 540,1228",
  "600,1226 620,1226",
  "665,1224 684,1224",
  "730,1224 826,1224 828,1226 880,1226",
  "906,1226 925,1230 957,1232 1005,1232",
  "1465,1202 1484,1202",
];
const QQE_FAST =
  "10,1440 57,1429 92,1422 138,1419 186,1413 234,1407 312,1401 362,1398 539,1398 603,1401 779,1402 842,1407 906,1414 957,1426 1005,1443 1035,1451 1068,1460 1145,1460 1163,1457 1196,1449 1232,1440 1260,1427 1290,1413 1339,1389 1369,1373 1400,1362 1419,1353 1450,1341 1484,1332";
const QQE_SLOW =
  "57,1468 138,1466 186,1461 266,1453 332,1447 394,1442 458,1437 523,1432 603,1429 682,1424 779,1420 842,1418 906,1416 955,1417 1035,1421 1099,1425 1163,1430 1196,1432 1306,1432 1339,1430 1400,1423 1450,1415 1484,1408";

const priceTicks = [
  "164.474", "164.319", "164.164", "", "163.859", "163.704", "163.549", "163.394",
  "163.244", "163.089", "162.934", "162.779", "", "162.474", "", "162.164",
];
// marker label, y of the level, y of the axis flag, selected
const levels: { price: string; y: number; flag: number; selected?: boolean }[] = [
  { price: "164.489", y: 104, flag: 103 },
  { price: "164.014", y: 308, flag: 307 },
  { price: "163.899", y: 358, flag: 357, selected: true },
  { price: "163.640", y: 470, flag: 469 },
  { price: "163.580", y: 494, flag: 493, selected: true },
  { price: "162.630", y: 902, flag: 901 },
  { price: "162.397", y: 1002, flag: 1001 },
  { price: "162.317", y: 1036, flag: 1035 },
];
const times = ["2023", "06:00", "06:40", "07:20", "08:00", "08:40", "09:20", "10:00", "10:40", "11:20", "12:00", "12:40"];

const Line = ({ points, color, width = 5 }: { points: string; color: string; width?: number }) => (
  <polyline points={points} fill="none" stroke={color} strokeWidth={width} />
);
const Frame = () => <rect width="100%" height="100%" fill="none" stroke="#000" strokeWidth="4" />;
const Handle = ({ x, y }: { x: number; y: number }) => (
  <rect x={x + 2} y={y - 4} width="8" height="8" fill={C.chart} stroke={C.magenta} strokeWidth="4" />
);
const AxisFlag = ({ y, price, color }: { y: number; price: string; color: string }) => (
  <g>
    <rect x="4" y={y - 11} width="78" height="22" fill={color} />
    <text x="10" y={y + 7} fill={C.chart}>
      {price}
    </text>
  </g>
);

const PricePanel = () => (
  <PanelRow>
    <Plot role="img" aria-label="GBPJPY five minute candles with moving averages">
      <g transform="translate(-8 -100)">
        <rect x="1290" y="328" width="224" height="52" fill="#faefe6" />
        {candles.map(([high, top, bottom, low, up], i) => {
          const x = 11 + i * 16;
          return (
            <g key={i}>
              <rect x={x - 1} y={high} width="2" height={low - high} />
              {up ? (
                <rect x={x - 4} y={top + 1} width="8" height={Math.max(bottom - top - 2, 2)} fill="#fff" stroke="#000" strokeWidth="2" />
              ) : (
                <rect x={x - 5} y={top} width="10" height={bottom - top} />
              )}
            </g>
          );
        })}
        <Line points={MA_STEEL} color={C.steel} />
        <Line points={MA_GREEN} color={C.green} />
        {T3_UP.map((p) => (
          <Line key={p} points={p} color={C.purple} />
        ))}
        {T3_DOWN.map((p) => (
          <Line key={p} points={p} color={C.orange} />
        ))}
        <Line points={MA_FAST} color="#000" />
        <Line points={BAND_UPPER} color={C.magenta} width={2} />
        <Line points={BAND_LOWER} color={C.magenta} width={2} />
        <Line points={MA_BROWN} color={C.brown} />
        <Line points={MA_THIN} color="#000" width={2} />
        <path d="M8 665H699V1110" fill="none" stroke={C.blue} strokeWidth="2" />
      </g>
      <Frame />
      <rect x="0" y="238" width="100%" height="2" />
      {levels.map((l) => (
        <rect key={l.price} x="0" y={l.y - 102} width="100%" height="4" fill={C.magenta} />
      ))}
      {levels
        .filter((l) => l.selected)
        .map((l) => (
          <g key={l.price}>
            <Handle x={0} y={l.y - 100} />
            <svg x="100%" overflow="visible">
              <Handle x={-14} y={l.y - 100} />
            </svg>
          </g>
        ))}
      <g transform="translate(-8 -100)">
        <path d="M1494 102h18l-9 10z" fill="#778899" />
        <rect x="907" y="247" width="576" height="718" fill="none" stroke={C.session} strokeWidth="2" />
        <text x="910" y="269" fontWeight="700" fontSize="22" fill="#dca22e">
          London 167
        </text>
        <text x="1546" y="350" fontFamily={ARIAL} fontSize="20" fill="#808080">
          1.5
        </text>
        <rect x="1480" y="336" width="116" height="4" fill="#8f1fd0" />
        <rect x="1478" y="342" width="118" height="4" />
        <text x="1576" y="344" fontFamily={ARIAL} fontSize="26">
          &lt; 0:26 (1.5)
        </text>
      </g>
      <text x="100%" dx="-23" y="982" textAnchor="end" fontFamily={ARIAL} fontWeight="700" fontSize="22">
        Pips 0.0
      </text>
    </Plot>
    <Axis aria-label="Price axis">
      <rect x="-4" y="362" width="6" height="487" />
      {priceTicks.map((price, i) => (
        <g key={i}>
          <rect x="0" y={12 + i * 66} width="4" height="2" />
          <text x="10" y={20 + i * 66}>
            {price}
          </text>
        </g>
      ))}
      <AxisFlag y={239} price="163.945" color="#000" />
      {levels.map((l) => (
        <AxisFlag key={l.price} y={l.flag - 100} price={l.price} color={C.magenta} />
      ))}
    </Axis>
    <PanelTitle $symbol>
      <TitleArrow />
      GBPJPY,M5
    </PanelTitle>
    <SwitchButton type="button">C12-on</SwitchButton>
    <ShowButton type="button">Show</ShowButton>
  </PanelRow>
);

const RsiPanel = () => (
  <PanelRow $height={208}>
    <Plot role="img" aria-label="RSI with divergence">
      <g transform="translate(-8 -1112)">
        {RSI_UP.map((p) => (
          <Line key={p} points={p} color={C.blue} />
        ))}
        {RSI_DOWN.map((p) => (
          <Line key={p} points={p} color={C.red} />
        ))}
      </g>
      {[70, 60, 50, 40, 30].map((level, i) => (
        <line key={level} x1="4" x2="100%" y1={71 + i * 26} y2={71 + i * 26} stroke="#000" strokeWidth="2" strokeDasharray="6 6" />
      ))}
      <Frame />
    </Plot>
    <Axis aria-label="RSI axis">
      <rect y="4" width="2" height="2" />
      <rect y="204" width="2" height="2" />
      <text x="6" y="22">95.2464</text>
      {[70, 60, 50, 40, 30].map((level, i) => (
        <text key={level} x="3" y={78 + i * 26}>
          {level}
        </text>
      ))}
      <text x="6" y="200">18.6</text>
    </Axis>
    <PanelTitle>rsi div1: rsi Ma (8.00) 62.0709 62.0709 62.0709 62.0709 53.3348 53.3348 66.2015</PanelTitle>
  </PanelRow>
);

const QqePanel = () => (
  <PanelRow $height={148}>
    <Plot role="img" aria-label="QQE of RSX">
      <g transform="translate(-8 -1322)">
        <Line points={QQE_FAST} color={C.blue} />
        <Line points={QQE_SLOW} color={C.maroon} />
      </g>
      <Frame />
    </Plot>
    <Axis aria-label="QQE axis">
      <rect y="4" width="2" height="2" />
      <rect y="144" width="2" height="2" />
      <text x="6" y="22">69.0441</text>
      <text x="6" y="140">49.7228</text>
    </Axis>
    <PanelTitle>qqe div1: qqe of RSX (55,2) 67.1898 66.5866 68.1659 68.1659</PanelTitle>
  </PanelRow>
);

const ToolButton = ({
  icon,
  label,
  menu,
  ...rest
}: {
  icon: string;
  label: string;
  menu?: boolean;
  $pressed?: boolean;
  $plain?: boolean;
  $width?: number;
}) => (
  <Tool type="button" aria-label={label} $width={menu ? 68 : undefined} {...rest}>
    <Icon name={icon} />
    {menu && <Caret />}
  </Tool>
);

const Toolbars = () => (
  <ToolBar role="toolbar">
    <ToolGroup>
      <Grip />
      <ToolButton icon="newChart" label="New chart" menu />
      <ToolButton icon="profiles" label="Profiles" menu />
      <Separator />
      <ToolButton icon="market" label="Market watch" />
      <ToolButton icon="crosshairWindow" label="Data window" />
      <ToolButton icon="favorites" label="Navigator" />
      <ToolButton icon="navigator" label="Terminal" />
      <ToolButton icon="tester" label="Strategy tester" />
      <Separator />
      <TextTool type="button">
        <Icon name="newOrder" />
        New Order
      </TextTool>
      <ToolButton icon="metaEditor" label="MetaEditor" />
      <ToolButton icon="cloud" label="Hosting" />
      <ToolButton icon="signals" label="Signals" />
      <TextTool type="button">
        <Icon name="autoTrading" />
        AutoTrading
      </TextTool>
    </ToolGroup>
    <ToolGroup>
      <Grip />
      <ToolButton icon="barChart" label="Bar chart" />
      <ToolButton icon="candleChart" label="Candlesticks" $pressed />
      <ToolButton icon="lineChart" label="Line chart" />
      <Separator />
      <ToolButton icon="zoomIn" label="Zoom in" />
      <ToolButton icon="zoomOut" label="Zoom out" />
      <ToolButton icon="tile" label="Tile windows" />
      <Separator />
      <ToolButton icon="autoScroll" label="Auto scroll" $pressed />
      <ToolButton icon="chartShift" label="Chart shift" $pressed $plain />
      <Separator />
      <ToolButton icon="indicators" label="Indicators" menu />
      <ToolButton icon="clock" label="Periods" menu />
      <ToolButton icon="template" label="Templates" menu />
    </ToolGroup>
    <ToolGroup>
      <Grip />
      {["M1", "M5", "M15", "M30", "H1", "H4", "D1", "W1", "MN"].map((p) => (
        <Tool key={p} type="button" $pressed={p === "M5"}>
          {p}
        </Tool>
      ))}
    </ToolGroup>
    <ToolGroup $grow>
      <Grip />
      <ToolButton icon="cursor" label="Cursor" $pressed />
      <ToolButton icon="crosshair" label="Crosshair" />
      <Separator />
      <ToolButton icon="verticalLine" label="Vertical line" />
      <ToolButton icon="horizontalLine" label="Horizontal line" />
      <ToolButton icon="trendLine" label="Trendline" />
      <ToolButton icon="channel" label="Equidistant channel" />
      <ToolButton icon="fibonacci" label="Fibonacci retracement" $width={36} />
      <ToolButton icon="search" label="Search" />
      <Tool type="button" aria-label="1 notification" $width={62}>
        <ChatIcon viewBox="0 0 46 46">
          <path d="M4 28a12 10 0 1114 9l-8 6 1-7a10 9 0 01-7-8z" fill="#e8eaf0" stroke="#a8a8ac" strokeWidth="2" />
          <circle cx="29" cy="19" r="17" fill="#de3a26" />
          <text x="29" y="27" textAnchor="middle" fontSize="21" fill="#fff">
            1
          </text>
        </ChatIcon>
      </Tool>
    </ToolGroup>
  </ToolBar>
);

const feedBars = [0, 1, 2, 3, 4, 5, 6, 7];

export default function App() {
  return (
    <Page>
      <GlobalStyle />
      <MenuBar>
        <MenuLogo viewBox="0 0 28 30">
          <rect x="1" y="1" width="21" height="17" fill="#fff" stroke="#5b8ff0" strokeWidth="2" strokeDasharray="4 1" />
          <path d="M1 3h21" stroke="#5b8ff0" strokeWidth="3" />
          <path d="M5 11h4V8m5 6V8h4" stroke="#5b8ff0" strokeWidth="2" fill="none" />
          <rect x="7" y="12" width="20" height="16" fill="#fff" stroke="#5b8ff0" strokeWidth="2" />
          <path d="M7 14h20" stroke="#5b8ff0" strokeWidth="2" />
          <path d="M11 20l4 5 3-6 3 6 3-5" stroke="#5b8ff0" strokeWidth="2" fill="none" />
        </MenuLogo>
        <MenuNav>
          {["File", "View", "Insert", "Charts", "Tools", "Window", "Help"].map((m) => (
            <MenuItem key={m} type="button">
              {m}
            </MenuItem>
          ))}
        </MenuNav>
        <WindowButtons>
          <WindowButton type="button" aria-label="Minimize">
            <svg viewBox="0 0 22 22">
              <path d="M4 17h10" stroke="#808080" strokeWidth="3" />
            </svg>
          </WindowButton>
          <WindowButton type="button" aria-label="Restore">
            <svg viewBox="0 0 22 22">
              <path d="M7 9V5h10v8h-3M3 10h10v8H3z" stroke="#808080" strokeWidth="2" fill="none" />
              <path d="M3 10h10" stroke="#222" strokeWidth="2" />
            </svg>
          </WindowButton>
          <WindowButton type="button" aria-label="Close">
            <svg viewBox="0 0 22 22">
              <path d="M4 4l12 12M16 4L4 16" stroke="#111" strokeWidth="3" />
            </svg>
          </WindowButton>
        </WindowButtons>
      </MenuBar>
      <Toolbars />
      <Workspace>
        <ChartWindow>
          <PricePanel />
          <RsiPanel />
          <QqePanel />
          <TimeAxis>
            {times.map((t) => (
              <TimeTick key={t}>10 Mar {t}</TimeTick>
            ))}
          </TimeAxis>
        </ChartWindow>
      </Workspace>
      <TabBar>
        <Tabs role="tablist">
          <Tab type="button" role="tab">
            GBPUSD,H1
          </Tab>
          <Tab type="button" role="tab" aria-selected $active>
            GBPJPY,M5
          </Tab>
          <Tab type="button" role="tab">
            GBPJPY,M1
          </Tab>
          <TabEnd />
        </Tabs>
        <TabScroll>
          <ScrollButton type="button" aria-label="Scroll tabs left">
            <svg width="6" height="12">
              <path d="M6 0v12L0 6z" fill="#909090" />
            </svg>
          </ScrollButton>
          <ScrollButton type="button" aria-label="Scroll tabs right">
            <svg width="6" height="12">
              <path d="M0 0v12l6-6z" fill="#909090" />
            </svg>
          </ScrollButton>
        </TabScroll>
      </TabBar>
      <StatusBar>
        <StatusCell>For Help, press F1</StatusCell>
        <StatusCell $width={218}>M1 ULTIMATE 1</StatusCell>
        <StatusCell $width={202} />
        <StatusCell $width={144} />
        <StatusCell $width={141} />
        <StatusCell $width={140} />
        <StatusCell $width={138} />
        <StatusCell $width={135} />
        <StatusCell $width={278}>
          <svg width="48" height="26" shapeRendering="crispEdges" aria-hidden="true">
            {feedBars.map((i) => (
              <g key={i}>
                <rect x={2 + i * 6} y="0" width="4" height={18 - i * 2} fill="#5a7a10" />
                <rect x={2 + i * 6} y={20 - i * 2} width="4" height={6 + i * 2} fill="#0a4260" />
              </g>
            ))}
          </svg>
          32003/30 kb
          <SizeGrip viewBox="0 0 30 32">
            <path d="M0 32L30 2M9 32L30 11M18 32l12-12M26 32l4-4" stroke="#808080" strokeWidth="3" />
            <path d="M-3 32L27 2M6 32L30 8" stroke="#fff" strokeWidth="1" />
          </SizeGrip>
        </StatusCell>
      </StatusBar>
    </Page>
  );
}
